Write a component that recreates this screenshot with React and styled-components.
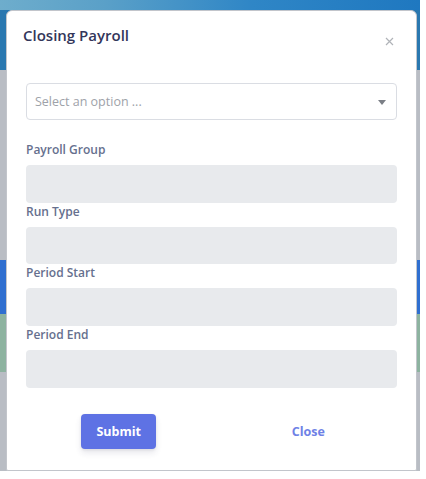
import React from "react";
import styled, { createGlobalStyle } from "styled-components";

const GlobalStyle = createGlobalStyle`
  html, body {
    margin: 0;
    padding: 0;
    background: #ffffff;
    font-family: "Open Sans", "Liberation Sans", sans-serif;
  }
  * { box-sizing: border-box; }
`;

const Backdrop = styled.div`
  width: 420px;
  height: 471px;
  padding: 10px 3px 0 6px;
  background:
    linear-gradient(to right, #6eadcc 0%, #5aa0c8 25%, #2f86c6 60%, #1f78c0 100%) top / 100% 10px no-repeat,
    linear-gradient(to bottom,
      #2a78b0 0px, #2a78b0 70px,
      #b9bdc4 70px, #b9bdc4 260px,
      #2f6fd0 260px, #2f6fd0 314px,
      #8db3a0 314px, #8db3a0 372px,
      #b9bdc4 372px);
`;

const Modal = styled.div`
  height: 100%;
  background: #ffffff;
  border: 1px solid #c2c5cb;
  border-radius: 6px 6px 2px 2px;
  display: flex;
  flex-direction: column;
`;

const Header = styled.div`
  display: flex;
  justify-content: space-between;
  align-items: flex-start;
  padding: 12px 22px 0 16px;
`;

const Title = styled.h5`
  margin: 0;
  font-size: 15px;
  line-height: 24px;
  font-weight: 600;
  color: #33365a;
`;

const CloseX = styled.button`
  border: 0;
  background: none;
  padding: 0;
  margin-top: 13px;
  width: 10px;
  height: 10px;
  display: flex;
  align-items: center;
  justify-content: center;
  cursor: pointer;
`;

const Body = styled.div`
  padding: 36px 19px 0 19px;
  display: flex;
  flex-direction: column;
`;

const SelectBox = styled.div`
  height: 37px;
  border: 1px solid #dadde3;
  border-radius: 4px;
  display: flex;
  align-items: center;
  justify-content: space-between;
  padding: 0 10px 0 8px;
  margin-bottom: 21px;
  font-size: 12.5px;
  color: #9ea2a9;
`;

const Caret = styled.span`
  width: 0;
  height: 0;
  border-left: 4px solid transparent;
  border-right: 4px solid transparent;
  border-top: 5px solid #7b7f86;
  margin-top: 1px;
`;

const Field = styled.div`
  display: flex;
  flex-direction: column;
`;

const Label = styled.label`
  font-size: 12px;
  line-height: 18px;
  font-weight: 600;
  color: #66708e;
  margin-bottom: 6px;
`;

const Input = styled.div`
  height: 37.7px;
  background: #e8eaed;
  border-radius: 4px;
`;

const Footer = styled.div`
  display: grid;
  grid-template-columns: 1fr 1fr;
  justify-items: center;
  align-items: center;
  padding: 26px 19px 0 19px;
`;

const Button = styled.button`
  border: 0;
  font-family: inherit;
  font-size: 12.5px;
  font-weight: 700;
  cursor: pointer;
  height: 35px;
  padding: 0 15px;
  border-radius: 4px;
  background: ${(p) => (p.primary ? "#5e72e4" : "transparent")};
  color: ${(p) => (p.primary ? "#ffffff" : "#6f82e6")};
  box-shadow: ${(p) => (p.primary ? "0 4px 6px rgba(50,50,93,.11), 0 1px 3px rgba(0,0,0,.08)" : "none")};
  margin-left: ${(p) => (p.primary ? "0" : "8px")};
`;

const fields = ["Payroll Group", "Run Type", "Period Start", "Period End"];

export default function App() {
  return (
    <>
      <GlobalStyle />
      <Backdrop>
        <Modal>
          <Header>
            <Title>Closing Payroll</Title>
            <CloseX aria-label="Close">
              <svg width="9" height="9" viewBox="0 0 9 9">
                <path d="M1 1 L8 8 M8 1 L1 8" stroke="#b0b3b8" strokeWidth="1.2" />
              </svg>
            </CloseX>
          </Header>
          <Body>
            <SelectBox>
              <span>Select an option ...</span>
              <Caret />
            </SelectBox>
            {fields.map((f) => (
              <Field key={f}>
                <Label>{f}</Label>
                <Input />
              </Field>
            ))}
          </Body>
          <Footer>
            <Button primary>Submit</Button>
            <Button>Close</Button>
          </Footer>
        </Modal>
      </Backdrop>
    </>
  );
}
